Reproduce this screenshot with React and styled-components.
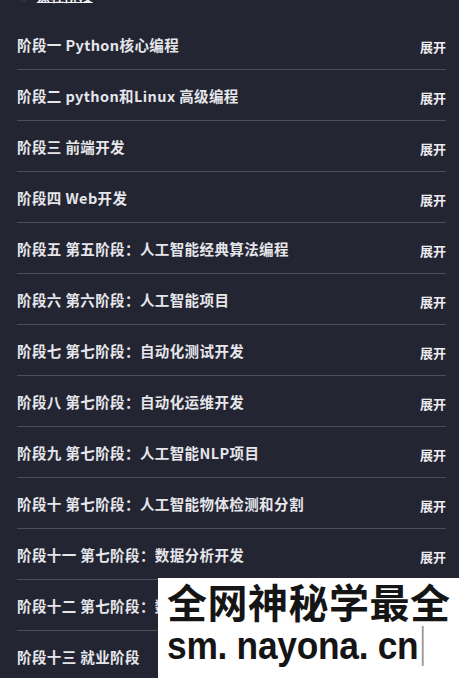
import styled, { createGlobalStyle } from "styled-components";

const GlobalStyle = createGlobalStyle`
  html, body {
    margin: 0;
    padding: 0;
    background: #232533;
  }
  body {
    font-family: "Noto Sans CJK SC", "Noto Sans", sans-serif;
    overflow: hidden;
  }
`;

const stages = [
  "阶段一 Python核心编程",
  "阶段二 python和Linux 高级编程",
  "阶段三 前端开发",
  "阶段四 Web开发",
  "阶段五 第五阶段：人工智能经典算法编程",
  "阶段六 第六阶段：人工智能项目",
  "阶段七 第七阶段：自动化测试开发",
  "阶段八 第七阶段：自动化运维开发",
  "阶段九 第七阶段：人工智能NLP项目",
  "阶段十 第七阶段：人工智能物体检测和分割",
  "阶段十一 第七阶段：数据分析开发",
  "阶段十二 第七阶段：数据挖掘开发",
  "阶段十三 就业阶段",
];

const App = () => {
  return (
    <Page>
      <GlobalStyle />
      <TopBar>
        <BackMark>«</BackMark>
        <TopLink>课程阶段</TopLink>
      </TopBar>
      <List>
        {stages.map((s) => (
          <Row key={s}>
            <Title>{s}</Title>
            <Toggle>展开</Toggle>
          </Row>
        ))}
      </List>
      <Watermark>
        <MarkBig>全网神秘学最全</MarkBig>
        <MarkSmall>
          sm. nayona. cn<Caret />
        </MarkSmall>
      </Watermark>
    </Page>
  );
};

const Page = styled.div`
  position: relative;
  width: 459px;
  height: 678px;
  overflow: hidden;
  background: #232533;
  color: #e9e9ec;
`;

const TopBar = styled.div`
  height: 19px;
  display: flex;
  align-items: flex-start;
  gap: 10px;
  padding-left: 20px;
  overflow: hidden;
`;

const BackMark = styled.span`
  margin-top: -13px;
  font-size: 14px;
  color: #4a3e48;
`;

const TopLink = styled.span`
  margin-top: -14px;
  font-size: 13px;
  font-weight: 700;
  color: #f2f2f2;
  text-decoration: underline;
  letter-spacing: 1px;
`;

const List = styled.div`
  padding: 0 13px 0 17px;
`;

const Row = styled.div`
  height: 50px;
  display: flex;
  align-items: center;
  justify-content: space-between;
  border-bottom: 1px solid #4b4d59;
`;

const Title = styled.span`
  font-size: 14.5px;
  font-weight: 600;
  letter-spacing: 0.4px;
  color: #e6e6ea;
  white-space: nowrap;
`;

const Toggle = styled.span`
  padding-top: 4px;
  font-size: 13px;
  font-weight: 600;
  color: #ececef;
`;

const Watermark = styled.div`
  position: absolute;
  left: 158px;
  top: 578px;
  right: 0;
  bottom: 0;
  background: #ffffff;
  padding: 0 0 0 9px;
  color: #151515;
`;

const MarkBig = styled.div`
  font-family: "Noto Sans CJK SC", sans-serif;
  font-size: 40px;
  font-weight: 700;
  line-height: 46px;
  letter-spacing: 0.5px;
`;

const MarkSmall = styled.div`
  display: flex;
  align-items: center;
  font-family: "Liberation Sans", Arial, sans-serif;
  font-size: 38px;
  font-weight: 700;
  line-height: 44px;
  letter-spacing: -0.3px;
  transform: scaleX(0.93);
  transform-origin: left center;
`;

const Caret = styled.span`
  display: inline-block;
  width: 2px;
  height: 40px;
  margin-left: 4px;
  background: #9a9a9a;
`;

export default App;
